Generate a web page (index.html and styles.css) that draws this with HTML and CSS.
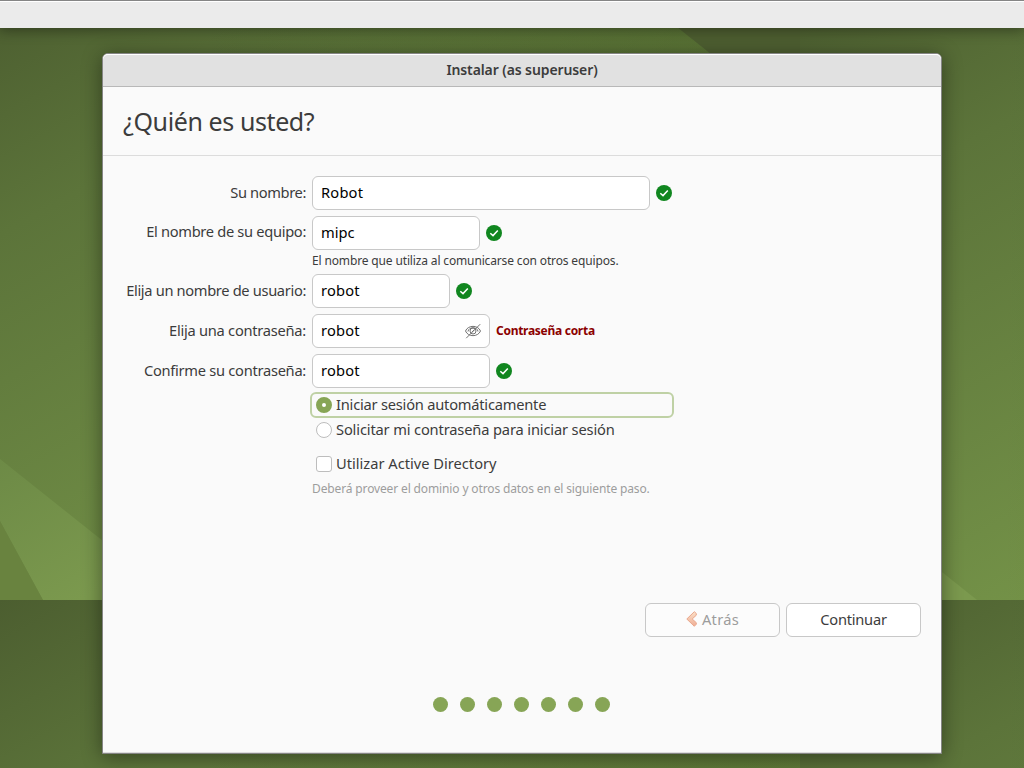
FILE: index.html
```html
<!DOCTYPE html>
<html lang="es">
<head>
<meta charset="utf-8">
<title>Instalar</title>
<link rel="stylesheet" href="styles.css">
</head>
<body>
<svg class="wallpaper" width="1024" height="768" aria-hidden="true">
  <defs>
    <linearGradient id="green" gradientUnits="userSpaceOnUse" x1="0" y1="0" x2="330" y2="600">
      <stop offset="0" stop-color="#4c5e30"/><stop offset=".3" stop-color="#5c743a"/><stop offset="1" stop-color="#769549"/>
    </linearGradient>
    <linearGradient id="shade" gradientUnits="userSpaceOnUse" x1="200" y1="0" x2="750" y2="0">
      <stop offset="0" stop-color="#2c4010" stop-opacity="0"/><stop offset="1" stop-color="#2c4010" stop-opacity=".24"/>
    </linearGradient>
    <linearGradient id="light" gradientUnits="userSpaceOnUse" x1="0" y1="460" x2="80" y2="600">
      <stop offset="0" stop-color="#6d8a46"/><stop offset="1" stop-color="#7b994e"/>
    </linearGradient>
    <pattern id="tile" width="800" height="600" patternUnits="userSpaceOnUse">
      <rect width="800" height="600" fill="url(#green)"/>
      <rect x="200" width="600" height="600" fill="url(#shade)"/>
      <path d="M643 0L800 125V0z" fill="#4e5f31"/>
      <path d="M0 459L177 600H43L0 521z" fill="url(#light)"/>
      <path d="M0 521L43 600H0z" fill="#69833f"/>
    </pattern>
  </defs>
  <rect width="1024" height="768" fill="url(#tile)"/>
</svg>
<svg class="symbols" width="0" height="0" aria-hidden="true">
  <symbol id="ok" viewBox="0 0 16 16"><circle cx="8" cy="8" r="8" fill="#10861f"/><path d="M4.3 8.2L7 10.6L11.8 5.4" fill="none" stroke="#fff" stroke-width="1.5"/></symbol>
</svg>
<div class="panel"></div>
<main class="window">
  <div class="titlebar"><span class="title">Instalar (as superuser)</span></div>
  <header class="header"><h1 class="heading">¿Quién es usted?</h1></header>
  <form class="form">
    <div class="row"><label class="label l1">Su nombre:</label><div class="entry w338"><span class="v1">Robot</span></div><svg class="ok"><use href="#ok"/></svg></div>
    <div class="row"><label class="label l2">El nombre de su equipo:</label><div class="entry w168"><span class="v2">mipc</span></div><svg class="ok"><use href="#ok"/></svg></div>
    <div class="help"><span class="helptext">El nombre que utiliza al comunicarse con otros equipos.</span></div>
    <div class="row"><label class="label l3">Elija un nombre de usuario:</label><div class="entry w138"><span class="v3">robot</span></div><svg class="ok"><use href="#ok"/></svg></div>
    <div class="row"><label class="label l4">Elija una contraseña:</label><div class="entry w178"><span class="v3">robot</span>
      <svg class="eye" width="16" height="16" viewBox="0 0 16 16" fill="none" stroke="#727272"><path d="M.5 8C3 1.8 13 1.8 15.500 8C13 14.200 3 14.200 .5 8z"/><path d="M3 8.500C3.500 3.500 12.500 3.500 13 8.500"/><circle cx="8" cy="8" r="3"/><path d="M6.700 9.300L9.300 6.700M1.200 15.200L15.200 1.200"/></svg></div><span class="weak">Contraseña corta</span></div>
    <div class="row"><label class="label l5">Confirme su contraseña:</label><div class="entry w178"><span class="v3">robot</span></div><svg class="ok"><use href="#ok"/></svg></div>
    <div class="choice focused"><i class="radio on"></i><span class="c1">Iniciar sesión automáticamente</span></div>
    <div class="choice"><i class="radio"></i><span class="c2">Solicitar mi contraseña para iniciar sesión</span></div>
    <div class="choice directory"><i class="check"></i><span class="c3">Utilizar Active Directory</span></div>
    <div class="note"><span class="notetext">Deberá proveer el dominio y otros datos en el siguiente paso.</span></div>
  </form>
  <div class="actions">
    <div class="button disabled"><svg class="arrow" width="12" height="16" viewBox="0 0 12 16"><defs><linearGradient id="arrow" x2="0" y2="1"><stop stop-color="#fae0c8"/><stop offset="1" stop-color="#efae96"/></linearGradient></defs><path d="M8.300 .7L.8 8L8.300 15.300L10.300 13.200V11.700L6.200 8L10.300 4.200V2.500z" fill="url(#arrow)" stroke="#e9a78c" stroke-linejoin="round"/></svg><span class="b1">Atrás</span></div>
    <div class="button"><span class="b2">Continuar</span></div>
  </div>
  <div class="dots"><i></i><i></i><i></i><i></i><i></i><i></i><i></i></div>
</main>
</body>
</html>
```
FILE: styles.css
```css
* { box-sizing: border-box; }
body { margin: 0; width: 1024px; height: 768px; overflow: hidden; background: #576f36; color: #3c3c3c; font: 14.67px "Noto Sans", "Open Sans", sans-serif; }
.wallpaper { position: absolute; inset: 0; z-index: -1; }
.symbols { position: absolute; }
span, label { white-space: nowrap; }
.panel { height: 28px; background: #ebebeb; border-top: 1px solid #858585; box-shadow: inset 0 1px #fff, 0 1px 14px 1px rgba(0,0,0,.4); }
.window { width: 840px; height: 701px; margin: 25px 0 0 102px; border: 1px solid #858585; border-radius: 6px 6px 0 0; background: #fafafa; box-shadow: 0 3px 20px rgba(0,0,0,.42), inset 0 -1px #ddd; }
.titlebar { height: 33px; display: flex; align-items: center; justify-content: center; padding-bottom: 2px; background: #e1e1e1; border-bottom: 1px solid #b8b8b8; border-radius: 5px 5px 0 0; box-shadow: inset 0 1px #fff; font-size: 14px; font-weight: 600; }
.title { letter-spacing: -.1px; }
.header { height: 69px; display: flex; align-items: center; padding-left: 20px; border-bottom: 1px solid #dcdcdc; }
.heading { margin: 0; font-size: 25px; font-weight: 400; line-height: 34px; letter-spacing: -.4px; white-space: nowrap; }
.form { padding: 20px 0 0; height: 447px; }
.row { display: flex; align-items: center; height: 34px; gap: 6px; margin-bottom: 6px; }
.label { width: 203px; display: flex; justify-content: flex-end; padding-bottom: 2px; }
.l1 { letter-spacing: -.38px; }
.l2 { letter-spacing: -.32px; padding-bottom: 4px; }
.l3 { letter-spacing: -.34px; }
.l4 { letter-spacing: -.26px; }
.l5 { letter-spacing: -.28px; }
.entry { height: 34px; display: flex; align-items: center; justify-content: space-between; padding: 0 8px; border: 1px solid #c8c8c8; border-radius: 6px; background: #fff; color: #000; }
.entry span, .choice span, .button span { padding-bottom: 2px; }
.v1, .v3 { letter-spacing: .2px; }
.w338 { width: 338px; } .w168 { width: 168px; } .w138 { width: 138px; } .w178 { width: 178px; }
.ok { width: 16px; height: 16px; }
.weak { color: #8b0000; font-size: 12px; font-weight: 700; letter-spacing: -.28px; padding-bottom: 2px; }
.help { margin: -5px 0 0 209px; height: 23px; line-height: 20px; font-size: 12px; letter-spacing: -.145px; }
.choice { display: flex; align-items: center; gap: 4px; width: 364px; height: 26px; margin-left: 207px; padding-left: 6px; }
.c1 { letter-spacing: -.22px; }
.c2 { letter-spacing: -.15px; }
.focused { margin-top: -2px; padding-left: 4px; border: 2px solid #bfd1a5; border-radius: 6px; height: 26px; }
.focused + .choice { height: 24px; }
.radio, .check { width: 16px; height: 16px; border: 1px solid #bdbdbd; border-radius: 50%; background: #fff; }
.on { border: 6px solid #87a556; }
.check { border-radius: 3px; }
.directory { margin-top: 9px; }
.note { margin: 1px 0 0 209px; font-size: 12px; line-height: 22px; letter-spacing: -.135px; color: #9d9d9d; }
.actions { display: flex; justify-content: flex-end; gap: 6px; padding-right: 20px; }
.button { width: 135px; height: 34px; display: flex; align-items: center; justify-content: center; gap: 4px; border: 1px solid #c8c8c8; border-radius: 6px; background: #fff; }
.disabled { color: #9d9d9d; background: #fcfcfc; }
.arrow { margin-bottom: 2px; }
.b1 { letter-spacing: .3px; }
.b2 { letter-spacing: -.25px; }
.dots { display: flex; gap: 12px; margin: 60px 0 0 330px; }
.dots i { width: 15px; height: 15px; border-radius: 50%; background: #87a556; }
```
